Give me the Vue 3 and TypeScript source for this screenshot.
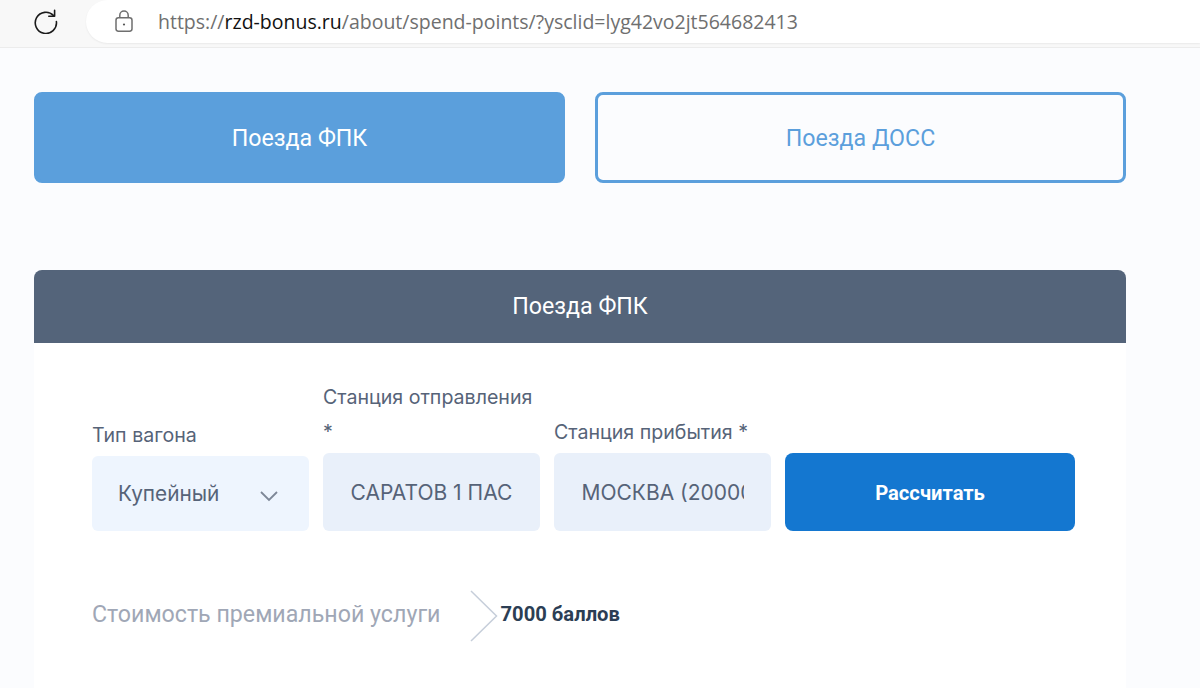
<script setup lang="ts">
const url = { scheme: 'https://', host: 'rzd-bonus.ru', rest: '/about/spend-points/?ysclid=lyg42vo2jt564682413' }
const tabs = [
  { label: 'Поезда ФПК', active: true },
  { label: 'Поезда ДОСС', active: false },
]
</script>

<template>
  <div class="page">
    <header class="toolbar">
      <svg class="reload" width="26" height="26" viewBox="0 0 26 26" fill="none" stroke="#1b1b1b" stroke-width="1.6">
        <path d="M20.6 7.6A10.6 10.6 0 1 0 23.4 13.6" stroke-linecap="round" />
        <path d="M21.6 2.4V8.2H15.8" stroke-linejoin="round" stroke-linecap="round" />
      </svg>
      <div class="address">
        <svg class="lock" width="20" height="24" viewBox="0 0 20 24" fill="none" stroke="#6f6f6f" stroke-width="1.5">
          <rect x="2" y="8.8" width="16" height="13.4" rx="2.4" />
          <path d="M5.8 8.8V6.2a4.2 4.2 0 0 1 8.4 0v2.6" />
          <circle cx="10" cy="15.5" r="1.1" fill="#555" stroke="none" />
        </svg>
        <span class="url"><span class="dim">{{ url.scheme }}</span><span class="host">{{ url.host }}</span><span class="dim">{{ url.rest }}</span></span>
      </div>
    </header>

    <main class="content">
      <nav class="tabs">
        <button v-for="t in tabs" :key="t.label" class="tab" :class="{ active: t.active }">{{ t.label }}</button>
      </nav>

      <section class="card">
        <h2 class="card-head">Поезда ФПК</h2>
        <div class="card-body">
          <form class="form" @submit.prevent>
            <div class="field">
              <label>Тип вагона</label>
              <div class="select">
                <span>Купейный</span>
                <svg width="20" height="12" viewBox="0 0 20 12" fill="none" stroke="#7d8797" stroke-width="1.8">
                  <path d="M2 2l8 8 8-8" />
                </svg>
              </div>
            </div>
            <div class="field">
              <label>Станция отправления *</label>
              <input class="input" readonly value="САРАТОВ 1 ПАСС" />
            </div>
            <div class="field">
              <label>Станция прибытия *</label>
              <input class="input" readonly value="МОСКВА (2000000)" />
            </div>
            <button class="submit" type="button">Рассчитать</button>
          </form>

          <div class="result">
            <span class="result-label">Стоимость премиальной услуги</span>
            <svg class="arrow" width="28" height="52" viewBox="0 0 28 52" fill="none" stroke="#c6ceda" stroke-width="1.5">
              <path d="M1 1l25.500 25L1 51" />
            </svg>
            <span class="result-value">7000 баллов</span>
          </div>
        </div>
      </section>
    </main>
  </div>
</template>

<style>
html, body { margin: 0; height: 100%; overflow: hidden; background: #fbfcfe; }
</style>

<style scoped>
.page {
  height: 688px;
  overflow: hidden;
  background: #fbfcfe;
  font-family: Inter, "Noto Sans", sans-serif;
}
.toolbar {
  height: 48px;
  box-sizing: border-box;
  display: flex;
  align-items: flex-start;
  background: #f8f8f8;
  border-bottom: 1px solid #ececec;
}
.reload { margin: 8px 0 0 33px; flex: none; }
.address {
  margin-left: 27px;
  flex: 1;
  height: 43px;
  box-sizing: border-box;
  background: #fff;
  border-radius: 22px 0 0 22px;
  display: flex;
  align-items: center;
  padding-left: 28px;
  box-shadow: 0 1px 2px rgba(0, 0, 0, 0.06);
}
.lock { flex: none; margin-top: -2px; }
.url {
  margin-left: 24px;
  font-family: "Open Sans", sans-serif;
  font-size: 19.5px;
  white-space: nowrap;
}
.dim { color: #6f6f6f; }
.host { color: #111; }

.content { padding: 44px 74px 0 34px; }
.tabs { display: flex; gap: 30px; }
.tab {
  flex: 1;
  height: 91px;
  box-sizing: border-box;
  border: 3px solid #5b9fdc;
  border-radius: 8px;
  background: transparent;
  color: #5b9fdc;
  font-family: Roboto, sans-serif;
  font-size: 23.2px;
  padding: 0;
}
.tab.active { background: #5b9fdc; color: #fff; }

.card { margin-top: 87px; }
.card-head {
  margin: 0;
  height: 73px;
  line-height: 72px;
  text-align: center;
  background: #54647a;
  border-radius: 8px 8px 0 0;
  color: #fff;
  font-family: Roboto, sans-serif;
  font-size: 23.2px;
  font-weight: 400;
}
.card-body {
  background: #fff;
  padding: 37px 51px 80px 58px;
}
.form {
  display: grid;
  grid-template-columns: 217px 217px 217px 290px;
  gap: 14px;
  align-items: end;
}
.field { display: flex; flex-direction: column; }
label {
  color: #566378;
  font-size: 19.6px;
  line-height: 35px;
  margin-bottom: 3px;
}
.select {
  height: 75px;
  box-sizing: border-box;
  background: #eef5fe;
  border-radius: 6px;
  padding: 0 30px 0 26px;
  display: flex;
  align-items: center;
  justify-content: space-between;
  color: #566378;
  font-size: 20.8px;
}
.select svg { margin-top: 5px; }
.input {
  height: 78px;
  width: 100%;
  box-sizing: border-box;
  border: 0;
  outline: 0;
  background: #e9f0fa;
  border-radius: 6px;
  padding: 0 27px 0 27.5px;
  color: #566378;
  font-family: Inter, sans-serif;
  font-size: 21px;
}
.submit {
  height: 78px;
  border: 0;
  border-radius: 8px;
  background: #1477d0;
  color: #fff;
  font-family: Roboto, sans-serif;
  font-size: 20.2px;
  font-weight: 700;
  padding: 2px 0 0;
}
.result {
  margin-top: 59px;
  display: flex;
  align-items: center;
}
.result-label {
  color: #a0a7b6;
  font-family: Roboto, sans-serif;
  font-size: 23.2px;
  margin-bottom: 4px;
}
.arrow { margin-left: 29px; flex: none; }
.result-value {
  margin-left: 3px;
  margin-bottom: 4px;
  color: #2c3e54;
  font-family: Roboto, sans-serif;
  font-size: 20.2px;
  font-weight: 700;
}
</style>
